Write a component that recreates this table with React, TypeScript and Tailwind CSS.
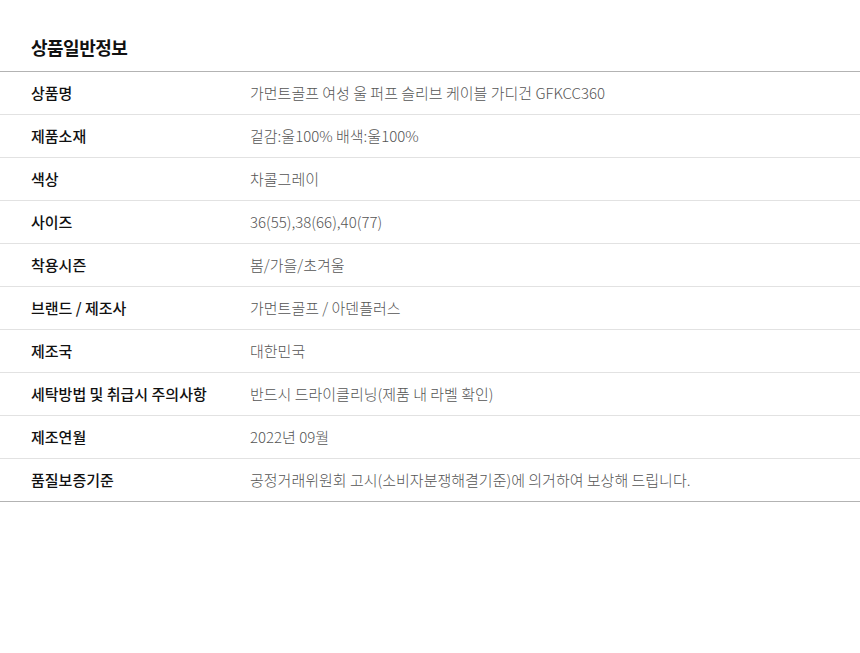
import React from "react";

const rows: [string, string][] = [
  ["상품명", "가먼트골프 여성 울 퍼프 슬리브 케이블 가디건 GFKCC360"],
  ["제품소재", "겉감:울100% 배색:울100%"],
  ["색상", "차콜그레이"],
  ["사이즈", "36(55),38(66),40(77)"],
  ["착용시즌", "봄/가을/초겨울"],
  ["브랜드 / 제조사", "가먼트골프 / 아덴플러스"],
  ["제조국", "대한민국"],
  ["세탁방법 및 취급시 주의사항", "반드시 드라이클리닝(제품 내 라벨 확인)"],
  ["제조연월", "2022년 09월"],
  ["품질보증기준", "공정거래위원회 고시(소비자분쟁해결기준)에 의거하여 보상해 드립니다."],
];

export default function App() {
  return (
    <div
      className="w-[860px] h-[653px] bg-white pt-[34px]"
      style={{ fontFamily: '"Noto Sans CJK KR", "Noto Sans", sans-serif' }}
    >
      <h2 className="pl-[31px] text-[18px] leading-[26px] font-bold text-[#111] tracking-[-0.5px] mb-[11px]">
        상품일반정보
      </h2>
      <div className="border-t border-b border-[#b3b3b3]">
        {rows.map(([k, v], i) => (
          <div
            key={k}
            className={i > 0 ? "flex items-center h-[43px] border-t border-[#e2e2e2]" : "flex items-center h-[42px]"}
          >
            <div className="w-[250px] pl-[31px] text-[15px] font-medium text-[#111]">
              {k}
            </div>
            <div className="flex-1 text-[15px] font-light text-[#555]">{v}</div>
          </div>
        ))}
      </div>
    </div>
  );
}
